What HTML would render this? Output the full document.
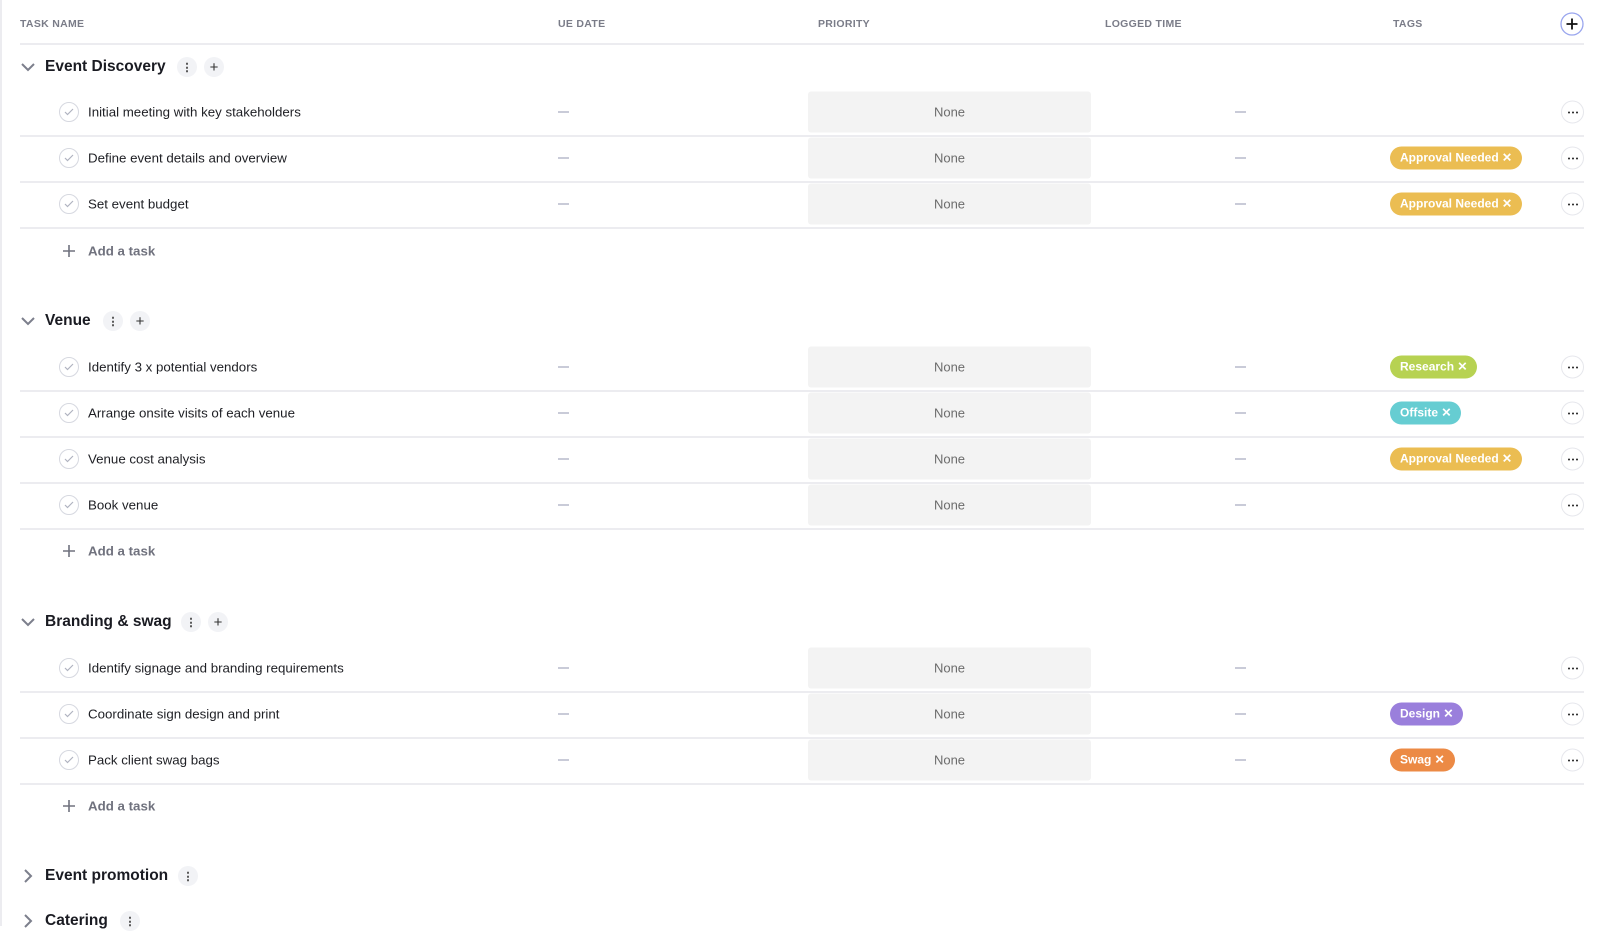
<!DOCTYPE html>
<html><head><meta charset="utf-8"><style>
*{margin:0;padding:0;box-sizing:border-box}
body{width:1610px;height:926px;overflow:hidden;background:#fff;font-family:"Liberation Sans",Arial,sans-serif;color:#1e1f24;position:relative}
.a{position:absolute}
.lb{left:0;top:0;width:2px;height:926px;background:#ececf0}
.hd{top:18px;font-size:10.5px;font-weight:bold;color:#7a7c88;letter-spacing:.3px}
.line{left:20px;width:1564px;height:1.5px;background:#ececf0}
.gh{left:45px;font-size:15.5px;font-weight:bold;color:#1a1b22;transform:translateY(-50%)}
.chev{left:20px;width:16px;height:16px;transform:translateY(-50%)}
.ib{width:20px;height:20px;border-radius:50%;background:#f2f3f6;transform:translate(-50%,-50%);display:flex;align-items:center;justify-content:center;font-size:15px;color:#333}
.ck{left:59px;width:20px;height:20px;border-radius:50%;border:1.3px solid #d6d8e0;transform:translateY(-50%)}
.tn{left:88px;font-size:13.3px;transform:translateY(-50%)}
.dash{width:11px;height:2px;background:#c9cbd8;transform:translateY(-50%)}
.pr{left:808px;width:283px;height:41px;background:#f3f3f3;border-radius:3px;transform:translateY(-50%);text-align:center;line-height:41px;font-size:13px;color:#6c6c6c}
.tag{left:1390px;height:23px;border-radius:12px;transform:translateY(-50%);color:#fff;font-size:12px;font-weight:bold;line-height:23px;padding:0 10px;white-space:nowrap}
.db{left:1561px;width:23px;height:23px;border-radius:50%;border:1px solid #e6e7ec;transform:translateY(-50%);display:flex;align-items:center;justify-content:center;gap:2px}
.db i{width:2px;height:2px;background:#222;border-radius:50%}
.add{left:88px;font-size:13.3px;font-weight:bold;color:#70727e;transform:translateY(-50%)}
.addp{left:62px;width:14px;height:14px;transform:translateY(-50%)}
</style></head><body>
<div class="a lb"></div>
<div class="a hd" style="left:20px">TASK NAME</div>
<div class="a hd" style="left:558px">UE DATE</div>
<div class="a hd" style="left:818px">PRIORITY</div>
<div class="a hd" style="left:1105px">LOGGED TIME</div>
<div class="a hd" style="left:1393px">TAGS</div>
<svg class="a" style="left:1560px;top:12px" width="24" height="24" viewBox="0 0 24 24"><circle cx="12" cy="12" r="11" fill="#fff" stroke="#9aa6ee" stroke-width="1.3"/><path d="M12 6.5v11M6.5 12h11" stroke="#111" stroke-width="1.8"/></svg>
<div class="a line" style="top:43px"></div>

<svg class="a chev" style="top:67px" viewBox="0 0 16 16"><path d="M2 5l6 6 6-6" fill="none" stroke="#7c7f8c" stroke-width="2"/></svg>
<div class="a gh" style="top:67px">Event Discovery</div>
<div class="a ib" style="left:187px;top:67px;font-size:11px;font-weight:bold">⋮</div>
<div class="a ib" style="left:214px;top:67px">+</div>

<div class="a ck" style="top:112px"></div><svg class="a" style="left:64px;top:108px" width="10" height="8" viewBox="0 0 10 8"><path d="M1 4l2.5 2.5L9 1" fill="none" stroke="#b0b3c0" stroke-width="1.2"/></svg>
<div class="a tn" style="top:112px">Initial meeting with key stakeholders</div>
<div class="a dash" style="left:558px;top:112px"></div><div class="a pr" style="top:112px">None</div><div class="a dash" style="left:1235px;top:112px"></div>
<div class="a db" style="top:112px"><i></i><i></i><i></i></div>
<div class="a line" style="top:135px"></div>

<div class="a ck" style="top:158px"></div><svg class="a" style="left:64px;top:154px" width="10" height="8" viewBox="0 0 10 8"><path d="M1 4l2.5 2.5L9 1" fill="none" stroke="#b0b3c0" stroke-width="1.2"/></svg>
<div class="a tn" style="top:158px">Define event details and overview</div>
<div class="a dash" style="left:558px;top:158px"></div><div class="a pr" style="top:158px">None</div><div class="a dash" style="left:1235px;top:158px"></div>
<div class="a tag" style="top:158px;background:#ebbd52">Approval Needed ✕</div>
<div class="a db" style="top:158px"><i></i><i></i><i></i></div>
<div class="a line" style="top:181px"></div>

<div class="a ck" style="top:204px"></div><svg class="a" style="left:64px;top:200px" width="10" height="8" viewBox="0 0 10 8"><path d="M1 4l2.5 2.5L9 1" fill="none" stroke="#b0b3c0" stroke-width="1.2"/></svg>
<div class="a tn" style="top:204px">Set event budget</div>
<div class="a dash" style="left:558px;top:204px"></div><div class="a pr" style="top:204px">None</div><div class="a dash" style="left:1235px;top:204px"></div>
<div class="a tag" style="top:204px;background:#ebbd52">Approval Needed ✕</div>
<div class="a db" style="top:204px"><i></i><i></i><i></i></div>
<div class="a line" style="top:227px"></div>

<svg class="a addp" style="top:251px" viewBox="0 0 14 14"><path d="M7 1v12M1 7h12" stroke="#70727e" stroke-width="1.6"/></svg><div class="a add" style="top:251px">Add a task</div>

<svg class="a chev" style="top:321px" viewBox="0 0 16 16"><path d="M2 5l6 6 6-6" fill="none" stroke="#7c7f8c" stroke-width="2"/></svg>
<div class="a gh" style="top:321px">Venue</div>
<div class="a ib" style="left:113px;top:321px;font-size:11px;font-weight:bold">⋮</div>
<div class="a ib" style="left:140px;top:321px">+</div>

<div class="a ck" style="top:367px"></div><svg class="a" style="left:64px;top:363px" width="10" height="8" viewBox="0 0 10 8"><path d="M1 4l2.5 2.5L9 1" fill="none" stroke="#b0b3c0" stroke-width="1.2"/></svg>
<div class="a tn" style="top:367px">Identify 3 x potential vendors</div>
<div class="a dash" style="left:558px;top:367px"></div><div class="a pr" style="top:367px">None</div><div class="a dash" style="left:1235px;top:367px"></div>
<div class="a tag" style="top:367px;background:#b7d252">Research ✕</div>
<div class="a db" style="top:367px"><i></i><i></i><i></i></div>
<div class="a line" style="top:390px"></div>

<div class="a ck" style="top:413px"></div><svg class="a" style="left:64px;top:409px" width="10" height="8" viewBox="0 0 10 8"><path d="M1 4l2.5 2.5L9 1" fill="none" stroke="#b0b3c0" stroke-width="1.2"/></svg>
<div class="a tn" style="top:413px">Arrange onsite visits of each venue</div>
<div class="a dash" style="left:558px;top:413px"></div><div class="a pr" style="top:413px">None</div><div class="a dash" style="left:1235px;top:413px"></div>
<div class="a tag" style="top:413px;background:#66cdd2">Offsite ✕</div>
<div class="a db" style="top:413px"><i></i><i></i><i></i></div>
<div class="a line" style="top:436px"></div>

<div class="a ck" style="top:459px"></div><svg class="a" style="left:64px;top:455px" width="10" height="8" viewBox="0 0 10 8"><path d="M1 4l2.5 2.5L9 1" fill="none" stroke="#b0b3c0" stroke-width="1.2"/></svg>
<div class="a tn" style="top:459px">Venue cost analysis</div>
<div class="a dash" style="left:558px;top:459px"></div><div class="a pr" style="top:459px">None</div><div class="a dash" style="left:1235px;top:459px"></div>
<div class="a tag" style="top:459px;background:#ebbd52">Approval Needed ✕</div>
<div class="a db" style="top:459px"><i></i><i></i><i></i></div>
<div class="a line" style="top:482px"></div>

<div class="a ck" style="top:505px"></div><svg class="a" style="left:64px;top:501px" width="10" height="8" viewBox="0 0 10 8"><path d="M1 4l2.5 2.5L9 1" fill="none" stroke="#b0b3c0" stroke-width="1.2"/></svg>
<div class="a tn" style="top:505px">Book venue</div>
<div class="a dash" style="left:558px;top:505px"></div><div class="a pr" style="top:505px">None</div><div class="a dash" style="left:1235px;top:505px"></div>
<div class="a db" style="top:505px"><i></i><i></i><i></i></div>
<div class="a line" style="top:528px"></div>

<svg class="a addp" style="top:551px" viewBox="0 0 14 14"><path d="M7 1v12M1 7h12" stroke="#70727e" stroke-width="1.6"/></svg><div class="a add" style="top:551px">Add a task</div>

<svg class="a chev" style="top:622px" viewBox="0 0 16 16"><path d="M2 5l6 6 6-6" fill="none" stroke="#7c7f8c" stroke-width="2"/></svg>
<div class="a gh" style="top:622px">Branding &amp; swag</div>
<div class="a ib" style="left:191px;top:622px;font-size:11px;font-weight:bold">⋮</div>
<div class="a ib" style="left:218px;top:622px">+</div>

<div class="a ck" style="top:668px"></div><svg class="a" style="left:64px;top:664px" width="10" height="8" viewBox="0 0 10 8"><path d="M1 4l2.5 2.5L9 1" fill="none" stroke="#b0b3c0" stroke-width="1.2"/></svg>
<div class="a tn" style="top:668px">Identify signage and branding requirements</div>
<div class="a dash" style="left:558px;top:668px"></div><div class="a pr" style="top:668px">None</div><div class="a dash" style="left:1235px;top:668px"></div>
<div class="a db" style="top:668px"><i></i><i></i><i></i></div>
<div class="a line" style="top:691px"></div>

<div class="a ck" style="top:714px"></div><svg class="a" style="left:64px;top:710px" width="10" height="8" viewBox="0 0 10 8"><path d="M1 4l2.5 2.5L9 1" fill="none" stroke="#b0b3c0" stroke-width="1.2"/></svg>
<div class="a tn" style="top:714px">Coordinate sign design and print</div>
<div class="a dash" style="left:558px;top:714px"></div><div class="a pr" style="top:714px">None</div><div class="a dash" style="left:1235px;top:714px"></div>
<div class="a tag" style="top:714px;background:#9a7fdc">Design ✕</div>
<div class="a db" style="top:714px"><i></i><i></i><i></i></div>
<div class="a line" style="top:737px"></div>

<div class="a ck" style="top:760px"></div><svg class="a" style="left:64px;top:756px" width="10" height="8" viewBox="0 0 10 8"><path d="M1 4l2.5 2.5L9 1" fill="none" stroke="#b0b3c0" stroke-width="1.2"/></svg>
<div class="a tn" style="top:760px">Pack client swag bags</div>
<div class="a dash" style="left:558px;top:760px"></div><div class="a pr" style="top:760px">None</div><div class="a dash" style="left:1235px;top:760px"></div>
<div class="a tag" style="top:760px;background:#ec8a45">Swag ✕</div>
<div class="a db" style="top:760px"><i></i><i></i><i></i></div>
<div class="a line" style="top:783px"></div>

<svg class="a addp" style="top:806px" viewBox="0 0 14 14"><path d="M7 1v12M1 7h12" stroke="#70727e" stroke-width="1.6"/></svg><div class="a add" style="top:806px">Add a task</div>

<svg class="a chev" style="top:876px" viewBox="0 0 16 16"><path d="M5 2l6 6-6 6" fill="none" stroke="#7c7f8c" stroke-width="2"/></svg>
<div class="a gh" style="top:876px">Event promotion</div>
<div class="a ib" style="left:188px;top:876px;font-size:11px;font-weight:bold">⋮</div>

<svg class="a chev" style="top:921px" viewBox="0 0 16 16"><path d="M5 2l6 6-6 6" fill="none" stroke="#7c7f8c" stroke-width="2"/></svg>
<div class="a gh" style="top:921px">Catering</div>
<div class="a ib" style="left:130px;top:921px;font-size:11px;font-weight:bold">⋮</div>
</body></html>
